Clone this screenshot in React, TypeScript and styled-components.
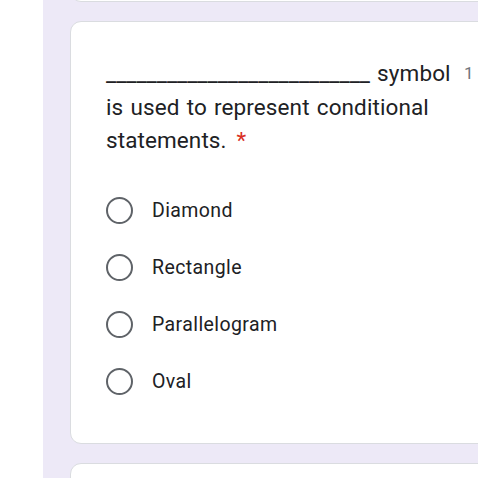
import React from "react";
import styled, { createGlobalStyle } from "styled-components";

const Global = createGlobalStyle`
  html, body { margin: 0; padding: 0; background: #ffffff; overflow: hidden; }
  body { font-family: Roboto, "Liberation Sans", sans-serif; }
`;

const Page = styled.div`
  display: flex;
  width: 478px;
  height: 478px;
  overflow: hidden;
`;

const Strip = styled.div`
  width: 43px;
  flex-shrink: 0;
  background: #ffffff;
`;

const Main = styled.div`
  flex: 1;
  background: #ede9f7;
  padding-left: 27px;
  overflow: hidden;
`;

const Column = styled.div`
  display: flex;
  flex-direction: column;
  gap: 19px;
  margin-top: -40px;
  width: 460px;
`;

const Card = styled.div<{ $h?: number }>`
  background: #ffffff;
  border: 1px solid #dadce0;
  border-radius: 11px;
  box-sizing: border-box;
  ${(p) => (p.$h ? `height: ${p.$h}px;` : "")}
`;

const QuestionCard = styled(Card)`
  height: 423px;
  padding: 35px 0 0 35px;
`;

const Header = styled.div`
  display: flex;
  align-items: flex-start;
`;

const Title = styled.div`
  width: 348px;
  flex-shrink: 0;
  font-size: 22.5px;
  line-height: 33.5px;
  color: #202124;
  letter-spacing: 0.1px;
  word-spacing: 1.5px;
`;

const Blank = styled.span`
  letter-spacing: 0px;
`;

const Required = styled.span`
  color: #d93025;
  margin-left: 10px;
`;

const Points = styled.div`
  font-size: 17px;
  line-height: 33.5px;
  color: #70757a;
  margin-left: 10px;
  white-space: nowrap;
`;

const Options = styled.div`
  display: flex;
  flex-direction: column;
  gap: 30px;
  margin-top: 39px;
`;

const Option = styled.label`
  display: flex;
  align-items: center;
  gap: 19px;
  height: 27px;
`;

const Radio = styled.span`
  width: 27px;
  height: 27px;
  border: 2.7px solid #5f6368;
  border-radius: 50%;
  box-sizing: border-box;
  flex-shrink: 0;
`;

const OptionText = styled.span`
  font-size: 19.5px;
  color: #202124;
  letter-spacing: 0.4px;
`;

const options = ["Diamond", "Rectangle", "Parallelogram", "Oval"];

export default function App() {
  return (
    <>
      <Global />
      <Page>
        <Strip />
        <Main>
          <Column>
            <Card $h={42} />
            <QuestionCard>
              <Header>
                <Title>
                  <Blank>__________________________</Blank> symbol is used to represent conditional statements.
                  <Required>*</Required>
                </Title>
                <Points>1 point</Points>
              </Header>
              <Options>
                {options.map((o) => (
                  <Option key={o}>
                    <Radio />
                    <OptionText>{o}</OptionText>
                  </Option>
                ))}
              </Options>
            </QuestionCard>
            <Card $h={100} />
          </Column>
        </Main>
      </Page>
    </>
  );
}
